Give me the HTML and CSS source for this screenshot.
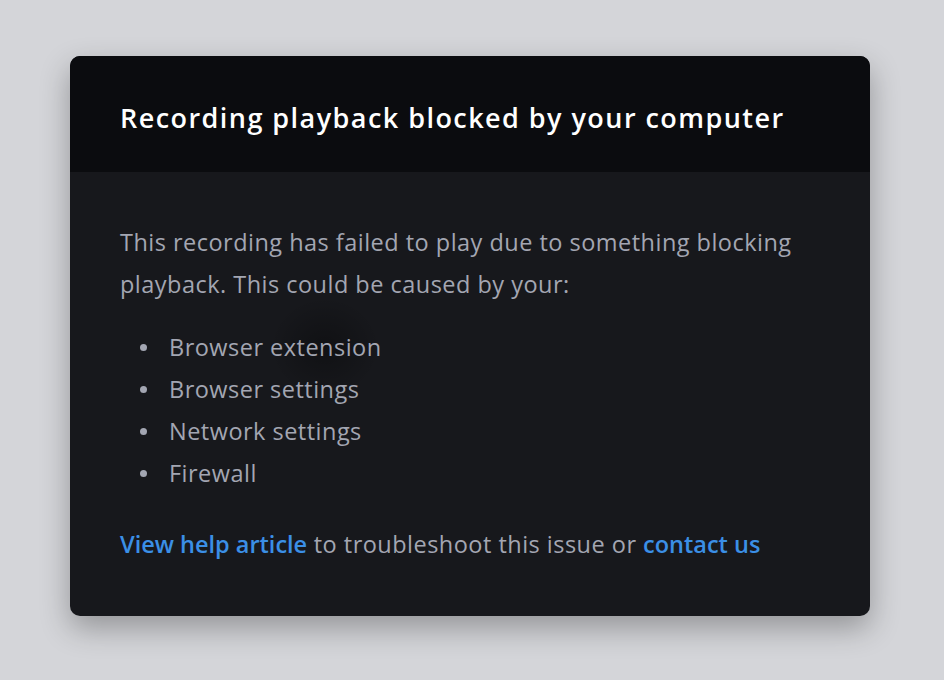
FILE: index.html
```html
<!DOCTYPE html>
<html lang="en">
<head>
<meta charset="utf-8">
<title>Recording playback blocked</title>
<link rel="stylesheet" href="styles.css">
</head>
<body>
<div class="page">
  <div class="card">
    <div class="card-header">
      <h1 class="title">Recording playback blocked by your computer</h1>
    </div>
    <div class="card-body">
      <div class="glow"></div>
      <p class="intro">This recording has failed to play due to something blocking playback. This could be caused by your:</p>
      <ul class="causes">
        <li>Browser extension</li>
        <li>Browser settings</li>
        <li>Network settings</li>
        <li>Firewall</li>
      </ul>
      <p class="help"><a class="link" href="#">View help article</a> to troubleshoot this issue or <a class="link" href="#">contact us</a></p>
    </div>
  </div>
</div>
</body>
</html>
```
FILE: styles.css
```css
html, body {
  margin: 0;
  padding: 0;
  height: 100%;
}
body {
  background: #d4d5d9;
  font-family: "Open Sans", Lato, sans-serif;
}
.page {
  padding: 56px 74px 0 70px;
}
.card {
  width: 800px;
  border-radius: 10px;
  overflow: hidden;
  background: #17181c;
  box-shadow: 0 12px 30px rgba(0, 0, 0, 0.3);
}
.card-header {
  background: #0b0c0f;
  height: 116px;
  box-sizing: border-box;
  display: flex;
  align-items: center;
  padding: 6px 50px 0;
}
.title {
  margin: 0;
  color: #ffffff;
  font-size: 27px;
  font-weight: 600;
  letter-spacing: 1.45px;
}
.card-body {
  position: relative;
  padding: 49px 50px 51px;
}
.glow {
  position: absolute;
  left: 200px;
  top: 125px;
  width: 110px;
  height: 100px;
  background: radial-gradient(closest-side, rgba(0,0,0,0.3), rgba(0,0,0,0));
  pointer-events: none;
}
.intro, .help, .causes {
  position: relative;
  margin: 0;
  color: #a3a6b2;
  font-size: 23.5px;
  line-height: 42px;
  letter-spacing: 0.48px;
}
.causes {
  list-style: none;
  margin: 21px 0 29px;
  padding: 0 0 0 20px;
}
.causes li {
  display: flex;
  align-items: center;
  gap: 22px;
}
.causes li::before {
  content: "";
  width: 7px;
  height: 7px;
  border-radius: 50%;
  background: #a3a6b2;
  flex: none;
}
.link {
  color: #3b8fe6;
  text-decoration: none;
  font-weight: 600;
  letter-spacing: 0;
}
```
